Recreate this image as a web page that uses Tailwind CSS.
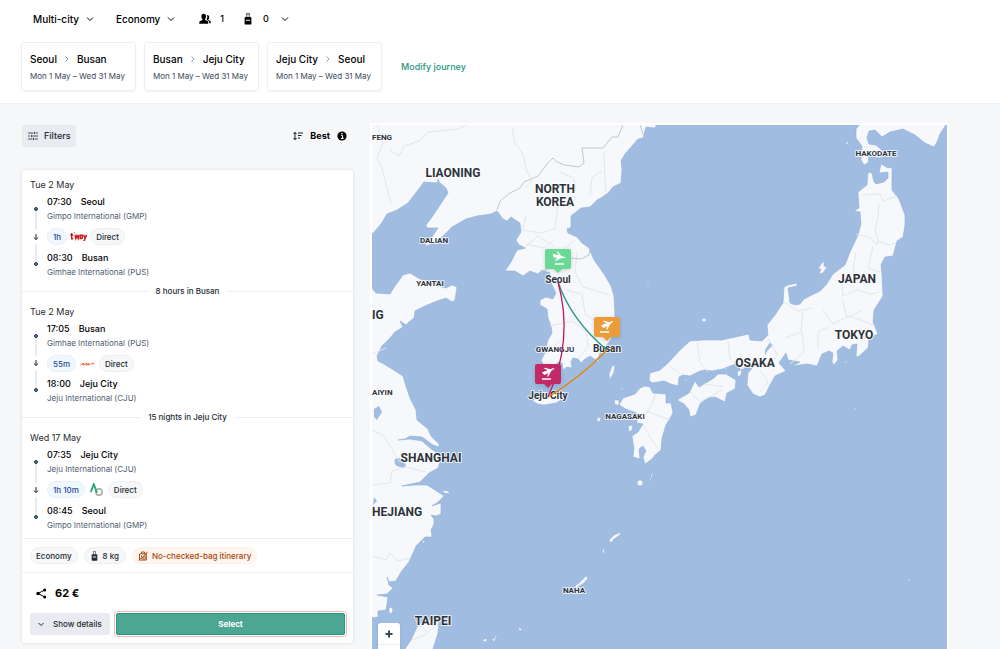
<!DOCTYPE html>
<html lang="en">
<head>
    <meta charset="UTF-8">
    <meta name="viewport" content="width=device-width, initial-scale=1.0">
    <title>Seoul – Busan – Jeju City</title>
    <script src="https://cdn.jsdelivr.net/npm/@tailwindcss/browser@4"></script>
</head>
<body class="flex min-h-screen flex-col bg-[#f5f7f9] font-['Inter','Liberation_Sans',sans-serif] text-[9px] leading-[14px] text-[#252a31]">

    <!-- Search bar -->
    <header class="border-b border-[#f0f2f5] bg-white px-[21px] pt-[7px] pb-3 font-medium text-black">
        <div class="flex h-6 items-center pl-3">
            <label class="flex items-center gap-[6px]">
                <select aria-label="Trip type" class="appearance-none text-[10px]">
                    <option>Multi-city</option>
                    <option>Return</option>
                </select>
                <svg class="size-2" viewBox="0 0 8 8" fill="none" stroke="currentColor"><path d="M1 2.500 4 5.500 7 2.500"/></svg>
            </label>
            <label class="ml-[22px] flex items-center gap-[6px]">
                <select aria-label="Cabin class" class="appearance-none text-[10px]">
                    <option>Economy</option>
                </select>
                <svg class="size-2" viewBox="0 0 8 8" fill="none" stroke="currentColor"><path d="M1 2.500 4 5.500 7 2.500"/></svg>
            </label>
            <button type="button" aria-label="Passengers and bags" class="ml-6 flex items-center">
                <svg class="h-3 w-3" viewBox="0 0 12 12" fill="currentColor"><path d="M4.700.8c1.600 0 2.500 1.100 2.400 2.800-.1 1.200-.5 1.900-1 2.500v.8l2.300 1c.6.300.8.700.8 1.400v1.500H.3V9.300c0-.7.300-1.100.9-1.400l2.200-1v-.8c-.6-.6-1-1.300-1-2.500C2.300 1.900 3.100.8 4.700.8z"/><path d="M8 2c1.500-.2 2.200.8 2.200 2.200 0 .9-.3 1.500-.8 2v.7l1.600.8c.5.300.7.700.7 1.300v1.300h-1.500c0-1.500-.2-2.200-1.200-2.700L7.500 7c.6-1 1.200-3.400.5-5z"/></svg>
                <span class="ml-2 w-[6px]">1</span>
                <svg class="ml-[19px] h-3 w-2" viewBox="0 0 8 12" fill="currentColor"><path d="M2 .3h4v1H2zM2.300 1.300h1v2.700h-1zM4.700 1.300h1v2.700h-1z" opacity=".7"/><path fill-rule="evenodd" d="M1.500 4h5c.6 0 .9.400.9.900v5.800c0 .5-.3.900-.9.900h-5c-.6 0-.9-.4-.9-.9V4.900c0-.5.300-.9.900-.9zM2 6.700v1h4v-1z"/></svg>
                <span class="ml-[11px]">0</span>
                <svg class="ml-3 size-2" viewBox="0 0 8 8" fill="none" stroke="currentColor"><path d="M1 2.500 4 5.500 7 2.500"/></svg>
            </button>
        </div>

        <div class="mt-[11px] flex items-center gap-2">
            <button type="button" class="h-[49px] w-[115px] rounded-[3px] border border-[#eceff2] pl-2 text-left shadow-xs">
                <span class="flex h-[18px] items-center gap-[6px] text-[10px]">Seoul
                    <svg class="size-2 text-[#8fa0b5]" viewBox="0 0 8 8" fill="none" stroke="currentColor"><path d="M2.500 1.500 5 4 2.500 6.500"/></svg>
                    Busan
                </span>
                <span class="block h-4 text-[8px] leading-4 font-normal text-[#3b4858]">Mon 1 May – Wed 31 May</span>
            </button>
            <button type="button" class="h-[49px] w-[115px] rounded-[3px] border border-[#eceff2] pl-2 text-left shadow-xs">
                <span class="flex h-[18px] items-center gap-[6px] text-[10px]">Busan
                    <svg class="size-2 text-[#8fa0b5]" viewBox="0 0 8 8" fill="none" stroke="currentColor"><path d="M2.500 1.500 5 4 2.500 6.500"/></svg>
                    Jeju City
                </span>
                <span class="block h-4 text-[8px] leading-4 font-normal text-[#3b4858]">Mon 1 May – Wed 31 May</span>
            </button>
            <button type="button" class="h-[49px] w-[115px] rounded-[3px] border border-[#eceff2] pl-2 text-left shadow-xs">
                <span class="flex h-[18px] items-center gap-[6px] text-[10px]">Jeju City
                    <svg class="size-2 text-[#8fa0b5]" viewBox="0 0 8 8" fill="none" stroke="currentColor"><path d="M2.500 1.500 5 4 2.500 6.500"/></svg>
                    Seoul
                </span>
                <span class="block h-4 text-[8px] leading-4 font-normal text-[#3b4858]">Mon 1 May – Wed 31 May</span>
            </button>
            <a href="#" class="ml-[11px] text-[#259783]">Modify journey</a>
        </div>
    </header>

    <main class="flex flex-1 gap-[17px] pr-[51px] pl-[22px] pt-[19px]">

        <!-- Results column -->
        <section class="w-[331px] shrink-0 pt-[2px] pb-[5px]">
            <div class="flex items-center justify-between pr-[6px]">
                <button type="button" class="flex h-[22px] w-[54px] items-center gap-[6px] rounded-[3px] bg-[#e8ecf1] pl-[6px] font-medium">
                    <svg class="size-[10px]" viewBox="0 0 10 10" fill="none" stroke="currentColor" stroke-width=".8"><path d="M0 2h5.500M7.500 2H10M6.500.8v2.400M0 5h2M4 5h6M3.500 3.800v2.400M0 8h4.500M6.500 8H10M5.500 6.800v2.400"/></svg>
                    Filters
                </button>
                <button type="button" class="flex items-center gap-[7px] text-[9px] font-bold text-black">
                    <svg class="size-[10px]" viewBox="0 0 10 10" fill="none" stroke="currentColor" stroke-width=".9"><path d="M2 1.500v7M.5 3 2 1.300 3.500 3M.5 7 2 8.700 3.500 7M5 2h5M5 4.500h3.500M5 7h2"/></svg>
                    Best
                    <svg class="size-[10px]" viewBox="0 0 10 10"><circle cx="5" cy="5" r="4.600"/><path d="M4 4.300h1.600v3h.7M3.800 7.500h2.700" stroke="#fff" fill="none"/><circle cx="5" cy="2.500" r=".8" fill="#fff"/></svg>
                </button>
            </div>

            <article class="mt-[23px] rounded-[3px] bg-white shadow-[0_0_3px_rgba(37,42,49,0.16)]">
                <div class="px-2 pt-2">
                    <h3>Tue 2 May</h3>
                    <div class="mt-[3px] flex gap-[5px]">
                        <div class="flex w-3 flex-col items-center pt-3 pb-[13px]">
                            <span class="size-1 rounded-full border border-[#1f3a5c] bg-[#5f738c]"></span>
                            <span class="w-[2px] flex-1 bg-[#e8ecf1]"></span>
                            <svg class="my-[3px] size-2" viewBox="0 0 8 8" fill="none" stroke="currentColor"><path d="M4 1v5.500M1.800 4.500 4 6.500 6.200 4.500"/></svg>
                            <span class="w-[2px] flex-1 bg-[#e8ecf1]"></span>
                            <span class="size-1 rounded-full border border-[#1f3a5c] bg-[#5f738c]"></span>
                        </div>
                        <div>
                            <p class="flex gap-[9px] font-medium text-black"><time>07:30</time> Seoul</p>
                            <p class="text-[8px] text-[#4f5e71]">Gimpo International (GMP)</p>
                            <div class="mt-[5px] mb-[6px] flex h-[17px] items-center gap-[3px] text-[8px] font-medium">
                                <span class="flex h-[17px] items-center rounded-full border border-[#e4f0fa] bg-[#f0f7fe] px-[5px] text-[#1d4a9c]">1h</span>
                                <svg class="h-3 w-[17px]" viewBox="0 0 17 12" role="img" aria-label="t'way"><g fill="none" stroke="#c8161d" stroke-width="1.400"><path d="M1.700 2v5.800h1.500M.2 4h3"/><path d="M5 3.800 5.800 7.600 7 4.500 8.200 7.600 9 3.800"/><path d="M12.200 7.700V4.300H10.200v3.200h2M13.600 3.800l1.300 3.400M16.500 3.800 14.500 9.400h-1"/></g><path d="M3.800 1.300h1.300l-.7 1.700z" fill="#3a9a45"/></svg>
                                <span class="flex h-[17px] items-center rounded-full border border-[#eceff2] bg-[#f5f7f9] px-[5px]">Direct</span>
                            </div>
                            <p class="flex gap-[9px] font-medium text-black"><time>08:30</time> Busan</p>
                            <p class="text-[8px] text-[#4f5e71]">Gimhae International (PUS)</p>
                        </div>
                    </div>
                </div>

                <div class="mt-[5px] mb-[7px] flex items-center gap-2 text-[8px] font-medium before:h-px before:flex-1 before:bg-[#eceff2] after:h-px after:flex-1 after:bg-[#eceff2]">8 hours in Busan</div>

                <div class="px-2">
                    <h3>Tue 2 May</h3>
                    <div class="mt-[3px] flex gap-[5px]">
                        <div class="flex w-3 flex-col items-center pt-3 pb-[13px]">
                            <span class="size-1 rounded-full border border-[#1f3a5c] bg-[#5f738c]"></span>
                            <span class="w-[2px] flex-1 bg-[#e8ecf1]"></span>
                            <svg class="my-[3px] size-2" viewBox="0 0 8 8" fill="none" stroke="currentColor"><path d="M4 1v5.500M1.800 4.500 4 6.500 6.200 4.500"/></svg>
                            <span class="w-[2px] flex-1 bg-[#e8ecf1]"></span>
                            <span class="size-1 rounded-full border border-[#1f3a5c] bg-[#5f738c]"></span>
                        </div>
                        <div>
                            <p class="flex gap-[9px] font-medium text-black"><time>17:05</time> Busan</p>
                            <p class="text-[8px] text-[#4f5e71]">Gimhae International (PUS)</p>
                            <div class="mt-[5px] mb-[5px] flex h-[17px] items-center gap-1 text-[8px] font-medium">
                                <span class="flex h-[17px] items-center rounded-full border border-[#e4f0fa] bg-[#f0f7fe] px-[5px] text-[#1d4a9c]">55m</span>
                                <svg class="h-3 w-[15px]" viewBox="0 0 15 12" role="img" aria-label="Jeju Air"><path d="M.5 7 3.500 5.300l-.4 1.500h1.500l.8-1.400h1.200L6 6.800h1.500l.8-1.400-.4 1.400h1.500l.8-1.400M11.500 6.900l.8-1.600h2" fill="none" stroke="#ea5a28"/></svg>
                                <span class="flex h-[17px] items-center rounded-full border border-[#eceff2] bg-[#f5f7f9] px-[5px]">Direct</span>
                            </div>
                            <p class="flex gap-[9px] font-medium text-black"><time>18:00</time> Jeju City</p>
                            <p class="text-[8px] text-[#4f5e71]">Jeju International (CJU)</p>
                        </div>
                    </div>
                </div>

                <div class="mt-[5px] mb-[7px] flex items-center gap-2 text-[8px] font-medium before:h-px before:flex-1 before:bg-[#e8ecf1] after:h-px after:flex-1 after:bg-[#e8ecf1]">15 nights in Jeju City</div>

                <div class="px-2 pb-[6px]">
                    <h3>Wed 17 May</h3>
                    <div class="mt-[3px] flex gap-[5px]">
                        <div class="flex w-3 flex-col items-center pt-3 pb-[13px]">
                            <span class="size-1 rounded-full border border-[#1f3a5c] bg-[#5f738c]"></span>
                            <span class="w-[2px] flex-1 bg-[#e8ecf1]"></span>
                            <svg class="my-[3px] size-2" viewBox="0 0 8 8" fill="none" stroke="currentColor"><path d="M4 1v5.500M1.800 4.500 4 6.500 6.200 4.500"/></svg>
                            <span class="w-[2px] flex-1 bg-[#e8ecf1]"></span>
                            <span class="size-1 rounded-full border border-[#1f3a5c] bg-[#5f738c]"></span>
                        </div>
                        <div>
                            <p class="flex gap-[9px] font-medium text-black"><time>07:35</time> Jeju City</p>
                            <p class="text-[8px] text-[#4f5e71]">Jeju International (CJU)</p>
                            <div class="mt-[5px] mb-[6px] flex h-[17px] items-center gap-[5px] text-[8px] font-medium">
                                <span class="flex h-[17px] items-center rounded-full border border-[#e4f0fa] bg-[#f0f7fe] px-[5px] text-[#1d4a9c]">1h 10m</span>
                                <svg class="size-[13px]" viewBox="0 0 13 13" fill="none" role="img" aria-label="Air Seoul"><circle cx="9" cy="9" r="3.200" stroke="#a9aaa0" stroke-width="1.500"/><path d="M.8 9 3.800 1.200 7 9.800" stroke="#1fa67a" stroke-width="1.800"/></svg>
                                <span class="flex h-[17px] items-center rounded-full border border-[#eceff2] bg-[#f5f7f9] px-[5px]">Direct</span>
                            </div>
                            <p class="flex gap-[9px] font-medium text-black"><time>08:45</time> Seoul</p>
                            <p class="text-[8px] text-[#4f5e71]">Gimpo International (GMP)</p>
                        </div>
                    </div>
                </div>

                <div class="flex items-center gap-[6px] border-y border-[#eef1f4] px-2 py-2 text-[8px] font-medium">
                    <span class="flex h-[17px] items-center rounded-full border border-[#eceff2] bg-[#f5f7f9] px-[5px]">Economy</span>
                    <span class="flex h-[17px] items-center gap-[5px] rounded-full border border-[#eceff2] bg-[#f5f7f9] px-[6px]">
                        <svg class="h-[10px] w-[7px]" viewBox="0 0 8 12" fill="currentColor"><path d="M2 .3h4v1H2zM2.300 1.300h1v2.700h-1zM4.700 1.300h1v2.700h-1z" opacity=".7"/><path fill-rule="evenodd" d="M1.500 4h5c.6 0 .9.400.9.900v5.800c0 .5-.3.900-.9.900h-5c-.6 0-.9-.4-.9-.9V4.900c0-.5.300-.9.900-.9zM2 6.700v1h4v-1z"/></svg>
                        8 kg
                    </span>
                    <span class="flex h-[17px] items-center gap-1 rounded-full border border-[#fcf0e6] bg-[#fdf5ee] px-[5px] text-[#a9470f]">
                        <svg class="size-[10px]" viewBox="0 0 10 10" fill="none" stroke="currentColor"><path d="M2 2.800h6.300v6.200H1.500V2.800M3.500 2.500V1h3v1.500M3 8 9.500.800M.5 9.500 2.500 7.500M3.500 4.500v2M5.200 6v2.500M7 4.500v4"/></svg>
                        No-checked-bag itinerary
                    </span>
                </div>

                <div class="flex h-10 items-center gap-[8px] pl-[14px] text-[11px] font-bold text-black">
                    <button type="button" aria-label="Share">
                        <svg class="block size-[11px]" viewBox="0 0 11 11" fill="currentColor"><circle cx="2" cy="5.500" r="1.700"/><circle cx="8.700" cy="2" r="1.500"/><circle cx="8.700" cy="9" r="1.500"/><path d="M8.700 2 2 5.500 8.700 9" fill="none" stroke="currentColor"/></svg>
                    </button>
                    62 €
                </div>
                <div class="flex gap-[6px] px-2 pb-2 font-medium">
                    <button type="button" class="flex h-[22px] w-20 items-center gap-2 rounded-[3px] bg-[#e8ecf1] pl-[7px] text-[8px]">
                        <svg class="size-2" viewBox="0 0 8 8" fill="none" stroke="currentColor"><path d="M1.500 3 4 5.500 6.500 3"/></svg>
                        Show details
                    </button>
                    <button type="button" class="h-[22px] flex-1 rounded-[2px] border border-[#219a83] bg-[#4ca692] text-[8px] font-bold text-white outline-1 outline-offset-1 outline-[#f6b5b0]">Select</button>
                </div>
            </article>
        </section>

        <!-- Route map -->
        <section aria-label="Route map" class="relative flex-1 overflow-hidden border-2 border-b-0 border-white bg-[#a0bde1]">
            <svg class="absolute inset-0 size-full" viewBox="372 125 575 524" preserveAspectRatio="xMinYMin slice">
                <!-- land -->
                <g fill="#f6f8fb" stroke="#8fb0d8" stroke-width=".6" stroke-linejoin="round">
                    <path d="M370 123H657L655 128 646 127 643 138 638 139 632 146 625 154 621 161 622 170 621 183 613 187 608 193 601 198 597 200 590 207 581 208 571 216 571 227 567 230 568 233 577 237 582 243 589 248 594 260 604 274 611 286 614 296 615 317 613 335 610 341 605 347 600 353 597 361 590 356 585 359 581 363 578 359 573 358 571 362 572 368 567 367 563 370 562 363 558 362 555 368 551 364 548 370 544 366 541 360 545 353 546 347 548 340 552 333 551 326 548 318 547 309 540 305 540 300 546 297 553 299 556 293 553 287 549 278 550 273 542 270 538 274 530 271 523 276 515 271 505 271 511 262 517 250 526 248 519 245 516 240 521 232 520 223 511 217 507 221 503 219 497 211 491 214 477 216 466 219 452 227 443 236 436 241 430 245 424 246 430 240 438 228 427 228 426 225 432 217 440 205 448 193 446 188 439 182 438 179 437 183 424 182 415 194 408 203 397 210 387 214 381 224 375 231 370 237Z"/>
                    <path d="M370 286 376 293 390 294 395 286 403 275 410 273 420 279 430 281 438 286 446 288 452 285 457 287 455 300 452 302 446 298 437 301 425 306 415 311 414 318 409 322 406 325 400 321 403 327 395 332 390 338 382 346 377 356 378 361 384 364 395 371 403 376 405 383 410 398 416 410 417 420 428 429 431 436 439 444 439 447 433 445 422 437 410 436 405 439 398 440 410 439 422 441 430 448 437 453 440 462 438 468 429 473 420 482 402 486 415 485 427 485 435 490 444 496 438 502 432 506 441 503 441 514 436 516 431 515 434 519 434 524 431 530 432 537 425 537 420 542 416 546 414 551 411 557 409 562 401 572 396 581 389 582 387 577 389 585 393 588 387 594 377 595 388 597 386 610 378 611 378 617 370 618Z"/>
                    <path d="M403 652 411 640 417 627 425 620 439 620 438 633 432 652ZM532 401 539 396 550 394 561 395 563 399 556 403 544 405 538 404Z"/>
                    <path d="M861 123 856 129 856 138 862 146 861 160 864 165 868 163 869 156 880 158 884 152 876 145 869 144 867 138 869 131 875 130 882 137 890 132 903 129 915 135 925 143 934 147 937 142 940 134 947 123Z"/>
                    <path d="M868 172 872 173 874 182 876 184 884 182 888 178 888 172 879 173 881 164 888 168 892 167 892 190 899 199 905 215 905 225 903 237 897 241 893 256 885 257 881 265 882 275 883 296 874 310 873 322 878 334 869 338 868 348 858 357 856 356 857 344 852 345 850 350 843 346 837 351 838 360 834 365 832 362 833 353 829 351 822 354 817 366 807 364 792 366 800 362 788 360 786 353 779 363 786 371 775 376 770 385 765 395 760 397 753 394 747 385 748 373 753 367 747 366 741 370 735 364 723 369 712 371 705 370 700 371 690 376 683 375 679 377 678 386 671 384 664 381 652 383 649 380 650 373 660 370 668 363 680 350 690 341 703 340 722 340 740 336 749 334 750 340 762 341 768 335 767 325 775 315 783 303 784 287 788 285 797 283 797 286 788 288 790 303 795 305 800 304 804 299 820 291 826 285 833 274 845 265 850 252 858 235 861 224 860 212 854 211 859 208 858 192 867 185Z"/>
                    <path d="M677 400 689 393 695 381 699 387 714 378 718 374 726 374 736 380 735 389 727 393 725 402 715 397 707 398 700 404 696 415 690 417 689 410 684 404ZM737 372 742 369 741 375 738 377Z"/>
                    <path d="M623 398 635 394 640 388 645 386 650 387 653 393 666 394 666 403 671 403 673 413 666 425 662 438 661 450 655 455 652 459 645 464 643 457 646 451 643 446 639 449 640 459 633 457 634 449 632 436 638 432 643 424 637 423 637 413 631 411 626 409 619 405Z"/>
                    <path d="M609 374 612 366 615 365 614 372 610 380ZM596 358 599 360 597 362ZM614 400h5v5h-4zM597 417l4 1-1 4-3-1zM628 426l5-1-1 5-3 2zM818 269l3-5 3-3v5l3 1-4 6-4 1 2-5zM649 483 652 472 653 474 650 482ZM609 540 614 535 621 532 620 535 614 539 611 543ZM602 549h2l1 4h-2zM575 586 579 583 586 576 588 578 584 583 576 588ZM482 641l4-3 1 2-1 2zM491 638l3 1 2-4 1 1-3 6zM518 627l4 2-1 2-2-1zM442 490l6 1 2 3-6-1zM389 608l3-1 1 4-2 3-2-2zM422 541l3-1-1 4z"/>
                    <circle cx="640" cy="483" r="3"/><circle cx="704" cy="320" r="2"/><circle cx="648" cy="283" r="1"/><circle cx="847" cy="143" r="1.300"/><circle cx="846" cy="362" r="1"/><circle cx="855" cy="409" r="1"/><circle cx="909" cy="580" r="1"/><circle cx="622" cy="389" r="1"/><circle cx="686" cy="380" r="1"/><circle cx="726" cy="369" r="1"/>
                </g>

                <!-- lakes and inlets -->
                <path d="M395 459q6-3 8 2l3 4q-1 4-6 2-7-1-5-8zM374 409l5-3 3 6-5 8-3-3zM374 497l3 4-4 4zM765 350l5-8 3 3-5 5-3 5zM567 228l4 1-3 3z" fill="#a0bde1"/>

                <!-- borders -->
                <g fill="none" stroke="#e3e6eb" stroke-linejoin="round">
                    <path d="M377 125l6 18-6 15 5 10M390 150l9 6 5-10 15-5 9-9 30-3 14-7M512 128l3 16 8 10 4 18 5 8-6 8M382 168l5 20 4 16M526 215l-3 15 18 3 14-4 3-25M554 240l-10 8-18-4M604 152l1 28 1 12M590 195l2-18 10-6M560 172l14 6 2 14M524 248l14-12 16 10M575 240l-12 10-8 20M577 252l-2 20 8 15 13 4 14 4M566 290l16 4 3 20 18 12 9-2M550 326l22-5 14 10 2 16-10 12M555 345l12-10M372 354l14-6M372 430l12 6 16 26M372 485l18-2 2-12 14-4 20 5M372 556l14 4 4-7 7 8 14-3M412 640l14-6 12-10M415 620l12 12"/>
                    <path d="M862 195l18-1 3 7 14-5M879 203l-1 14-3 14 3 8-1 6-6-7-15-4M877 241l13 4 6-2M873 246l-5 22 12 4M856 252l-3 18 5 12M842 284l1 12 14-6 14 4 8-2M784 302l14 9 14-3M803 312l-2 20-16 6M802 332l2 20-14 12M823 310l10 14 16-8 12 4 14 6M830 326l-12 6v18M768 338l10 18M842 298l5 20 16-8M697 342l3 20 8 10M728 341l2 18 14 10M670 366l10 8M690 392l10 10 22-12M704 384l20 3M656 394l-8 18-14 8M648 412l22 8M644 425l6 12 8 12M760 370l8 12-8 10"/>
                </g>
                <g fill="none" stroke="#c3c6cf" stroke-linejoin="round">
                    <path d="M497 210l3-9 10-8 10-5 4-6 14-6 9-12 6-6 4 4 8 3 14 2 5-4-2-15 21 0 9-11 6 0 5-12M541 272l10-5 8 0M571 258l10 1 8-4 1-7M640 125l4 12"/>
                </g>

                <!-- place names -->
                <g fill="#2d333c" stroke="#fff" stroke-opacity=".75" stroke-width="2" stroke-linejoin="round" paint-order="stroke" text-anchor="middle" font-family="Roboto, sans-serif" font-weight="700">
                    <g font-size="12">
                        <text x="453" y="177">LIAONING</text>
                        <text x="555" y="193">NORTH</text>
                        <text x="555" y="206">KOREA</text>
                        <text x="857" y="283">JAPAN</text>
                        <text x="854" y="339">TOKYO</text>
                        <text x="755" y="367">OSAKA</text>
                        <text x="431" y="462">SHANGHAI</text>
                        <text x="433" y="625">TAIPEI</text>
                        <text x="372" y="516" text-anchor="start">HEJIANG</text>
                        <text x="372" y="319" text-anchor="start">IG</text>
                    </g>
                    <g font-size="8">
                        <text x="372" y="140" text-anchor="start">FENG</text>
                        <text x="434" y="243">DALIAN</text>
                        <text x="430" y="286">YANTAI</text>
                        <text x="876" y="156">HAKODATE</text>
                        <text x="555" y="352">GWANGJU</text>
                        <text x="625" y="419">NAGASAKI</text>
                        <text x="372" y="395" text-anchor="start">AIYIN</text>
                        <text x="574" y="593">NAHA</text>
                    </g>
                    <g font-size="10">
                        <text x="558" y="283">Seoul</text>
                        <text x="607" y="352">Busan</text>
                        <text x="548" y="399">Jeju City</text>
                    </g>
                </g>

                <!-- flights -->
                <g fill="none" stroke-width="1.300">
                    <path d="M558 282Q571 320 607 350" stroke="#259783"/>
                    <path d="M607 350Q580 378 548 397" stroke="#e98305"/>
                    <path d="M548 397Q574 340 558 282" stroke="#c0155d"/>
                </g>

                <!-- pins -->
                <defs>
                    <path id="pin" d="M-11 0h22a2 2 0 0 1 2 2v16a2 2 0 0 1-2 2H4l-4 4-4-4h-7a2 2 0 0 1-2-2V2a2 2 0 0 1 2-2z"/>
                    <path id="plane" d="M-6-1.500 0-1.800 6.500-2.200Q8-1.700 6.500-1L3.200.2-.8 4.300-2.200 4.300-.4 1.300-4.400 1.600ZM-2.800-4.800-1.400-5 3-1.800H.2Z"/>
                </defs>
                <g class="drop-shadow-sm">
                    <g transform="translate(558 249)">
                        <use href="#pin" fill="#6cd896"/>
                        <use href="#plane" fill="#fff" transform="translate(0 8) rotate(18)"/>
                        <path d="M-3 15h9" stroke="#fff" stroke-width="1.500"/>
                    </g>
                    <g transform="translate(607 317)">
                        <use href="#pin" fill="#ea9b3a"/>
                        <use href="#plane" fill="#fff" transform="translate(0 8) rotate(-18)"/>
                        <path d="M-7 15h9" stroke="#fff" stroke-width="1.500"/>
                    </g>
                    <g transform="translate(548 364)">
                        <use href="#pin" fill="#c12a66"/>
                        <use href="#plane" fill="#fff" transform="translate(0 8) rotate(-18)"/>
                        <path d="M-6 15h9" stroke="#fff" stroke-width="1.500"/>
                    </g>
                </g>
            </svg>
            <div class="absolute bottom-0 left-[6px] h-[26px] w-[22px] rounded-t-[3px] bg-white shadow-sm">
                <button type="button" aria-label="Zoom in" class="flex h-[22px] w-full items-center justify-center border-b border-[#e8ecf1]">
                    <svg class="size-2" viewBox="0 0 8 8" stroke="#3b4858" stroke-width="2"><path d="M4 .5v7M.5 4h7"/></svg>
                </button>
            </div>
        </section>
    </main>
</body>
</html>
